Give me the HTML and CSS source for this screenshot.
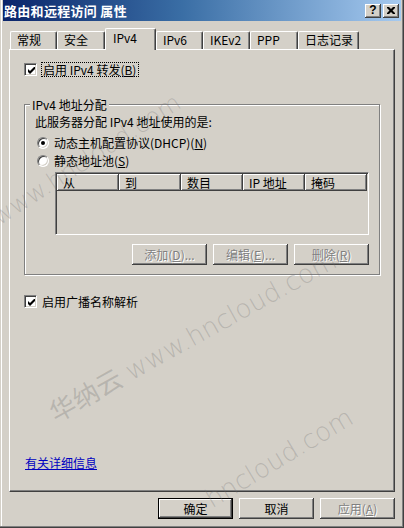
FILE: index.html
```html
<!DOCTYPE html>
<html lang="zh-CN">
<head>
<meta charset="utf-8">
<title>路由和远程访问 属性</title>
<link rel="stylesheet" href="styles.css">
</head>
<body>
<div class="window">
  <div class="titlebar">
    <span class="title">路由和远程访问 属性</span>
    <div class="caption-btns">
      <span class="cap-btn help">?</span>
      <span class="cap-btn close"><svg width="8" height="7" viewBox="0 0 8 7"><path d="M0 0h2l2 2 2-2h2v1l-2.5 2.5L8 6v1H6L4 5 2 7H0V6l2.5-2.5L0 1z" fill="#000"/></svg></span>
    </div>
  </div>

  <div class="tabs">
    <div class="tab t1">常规</div>
    <div class="tab t2">安全</div>
    <div class="tab selected">IPv4</div>
    <div class="tab t4">IPv6</div>
    <div class="tab t5">IKEv2</div>
    <div class="tab t6">PPP</div>
    <div class="tab t7">日志记录</div>
  </div>

  <div class="panel">
    <div class="check-row">
      <span class="checkbox"><svg width="7" height="7" viewBox="0 0 7 7"><path d="M0 2L2 4L7 -1V2L2 7L0 5Z" fill="#000"/></svg></span>
      <span class="label focus">启用 IPv4 转发(<u>B</u>)</span>
    </div>

    <div class="group">
      <div class="group-title">IPv4 地址分配</div>
      <div class="group-text">此服务器分配 IPv4 地址使用的是:</div>
      <div class="radio-row">
        <span class="radio on"></span>
        <span class="radio-label">动态主机配置协议(DHCP)(<u>N</u>)</span>
      </div>
      <div class="radio-row second">
        <span class="radio"></span>
        <span class="radio-label">静态地址池(<u>S</u>)</span>
      </div>
      <div class="listview">
        <div class="lv-header">
          <span class="col">从</span>
          <span class="col">到</span>
          <span class="col">数目</span>
          <span class="col">IP 地址</span>
          <span class="col">掩码</span>
        </div>
      </div>
      <div class="group-buttons">
        <button class="btn disabled">添加(<u>D</u>)...</button>
        <button class="btn disabled">编辑(<u>E</u>)...</button>
        <button class="btn disabled">删除(<u>R</u>)</button>
      </div>
    </div>

    <div class="check-row second">
      <span class="checkbox"><svg width="7" height="7" viewBox="0 0 7 7"><path d="M0 2L2 4L7 -1V2L2 7L0 5Z" fill="#000"/></svg></span>
      <span class="label plain">启用广播名称解析</span>
    </div>

    <a class="more-link" href="#">有关详细信息</a>
  </div>

  <div class="dialog-buttons">
    <button class="btn default">确定</button>
    <button class="btn">取消</button>
    <button class="btn disabled">应用(<u>A</u>)</button>
  </div>

  <div class="watermarks" aria-hidden="true">
    <span class="wm wm1">www.hncloud.com</span>
    <span class="wm wm2">华纳云 www.hncloud.com</span>
    <span class="wm wm3">hncloud.com</span>
  </div>
</div>
</body>
</html>
```

FILE: styles.css
```css
html, body {
  margin: 0;
  padding: 0;
}

body {
  font-family: "Noto Sans CJK SC", "Liberation Sans", sans-serif;
  font-size: 12px;
  color: #000;
  background: #d4d0c8;
}

.window {
  position: relative;
  width: 404px;
  height: 528px;
  box-sizing: border-box;
  background: #d4d0c8;
  box-shadow: inset -1px -1px #404040, inset -2px -2px #808080, inset 1px 0 #d4d0c8, inset 2px 0 #fff;
  overflow: hidden;
  display: flex;
  flex-direction: column;
}

/* Title bar */
.titlebar {
  height: 21px;
  margin: 0 3px;
  padding: 0 2px 0 1px;
  display: flex;
  align-items: center;
  justify-content: space-between;
  background: linear-gradient(to right, #0a246a 0%, #3a6ea5 45%, #a6caf0 100%);
}

.title {
  color: #fff;
  font-weight: bold;
  font-size: 13px;
  letter-spacing: 0.3px;
  line-height: 21px;
}

.caption-btns {
  display: flex;
  gap: 2px;
}

.cap-btn {
  width: 16px;
  height: 14px;
  box-sizing: border-box;
  background: #d4d0c8;
  box-shadow: inset -1px -1px #404040, inset 1px 1px #fff, inset -2px -2px #808080;
  display: flex;
  align-items: center;
  justify-content: center;
}

.cap-btn.help {
  font-family: "Liberation Sans", sans-serif;
  font-weight: bold;
  font-size: 12px;
  line-height: 14px;
  padding-bottom: 1px;
}

/* Tabs */
.tabs {
  display: flex;
  align-items: flex-end;
  height: 21px;
  margin: 7px 0 0 10px;
}

.tab {
  box-sizing: border-box;
  height: 18px;
  line-height: 16px;
  padding-left: 6px;
  background: #d4d0c8;
  border-top: 1px solid #fff;
  border-left: 1px solid #fff;
  border-right: 1px solid #404040;
  box-shadow: inset -1px 0 #808080;
  border-radius: 2px 2px 0 0;
  white-space: nowrap;
}

.t1 { width: 47px; }
.t2 { width: 48px; }
.t4 { width: 47px; }
.t5 { width: 47px; }
.t6 { width: 48px; }
.t7 { width: 61px; }

.tab.selected {
  position: relative;
  z-index: 2;
  width: 51px;
  height: 22px;
  margin-bottom: -1px;
  line-height: 18px;
  padding-left: 7px;
  padding-bottom: 3px;
}

/* Panel */
.panel {
  position: relative;
  z-index: 1;
  box-sizing: border-box;
  width: 386px;
  height: 443px;
  margin-left: 9px;
  padding: 12px 0 0 14px;
  border: 1px solid;
  border-color: #fff #404040 #404040 #fff;
  box-shadow: inset -1px -1px #808080;
  display: flex;
  flex-direction: column;
  align-items: flex-start;
}

.check-row {
  display: flex;
  align-items: center;
  height: 15px;
}

.check-row.second {
  margin-top: 19px;
}

.checkbox {
  width: 13px;
  height: 13px;
  box-sizing: border-box;
  background: #fff;
  border: 1px solid;
  border-color: #808080 #fff #fff #808080;
  box-shadow: inset 1px 1px #404040, inset -1px -1px #d4d0c8;
  display: flex;
  align-items: center;
  justify-content: center;
}

.checkbox svg {
  display: block;
  margin: 1px 0 0 1px;
}

.label {
  line-height: 13px;
  white-space: nowrap;
}

.label.focus {
  margin-left: 4px;
  padding: 0 2px 0 1px;
  border: 1px dotted #000;
}

.label.plain {
  margin-left: 5px;
}

/* Group box */
.group {
  box-sizing: border-box;
  width: 356px;
  height: 171px;
  margin-top: 27px;
  padding-left: 10px;
  border: 1px solid #808080;
  box-shadow: inset 1px 1px #fff, 1px 1px #fff;
}

.group-title {
  width: fit-content;
  margin: -7px 0 0 -5px;
  padding: 0 2px;
  line-height: 14px;
  background: #d4d0c8;
}

.group-text {
  margin-top: 3px;
  line-height: 14px;
}

.radio-row {
  display: flex;
  align-items: center;
  height: 14px;
  margin-top: 7px;
  padding-left: 2px;
}

.radio-row.second {
  margin-top: 4px;
}

.radio {
  position: relative;
  width: 12px;
  height: 12px;
  box-sizing: border-box;
  border-radius: 50%;
  background: #fff;
  border: 1px solid;
  border-color: #808080 #fff #fff #808080;
  box-shadow: inset 1px 1px #404040, inset -1px -1px #d4d0c8;
}

.radio.on::after {
  content: "";
  position: absolute;
  left: 3px;
  top: 3px;
  width: 4px;
  height: 4px;
  border-radius: 50%;
  background: #000;
}

.radio-label {
  margin-left: 5px;
  line-height: 14px;
  white-space: nowrap;
}

/* List view */
.listview {
  box-sizing: border-box;
  width: 314px;
  height: 63px;
  margin: 4px 0 0 20px;
  padding: 1px;
  border: 1px solid;
  border-color: #808080 #fff #fff #808080;
  box-shadow: inset 1px 1px #404040, inset -1px -1px #d4d0c8;
  background: #d4d0c8;
}

.lv-header {
  display: flex;
  height: 17px;
}

.col {
  box-sizing: border-box;
  width: 62px;
  height: 17px;
  padding-left: 6px;
  line-height: 17px;
  background: #d4d0c8;
  box-shadow: inset -1px -1px #404040, inset 1px 1px #fff, inset -2px -2px #808080;
  white-space: nowrap;
}

.group-buttons {
  display: flex;
  justify-content: flex-end;
  gap: 6px;
  width: 314px;
  margin: 9px 0 0 20px;
}

/* Buttons */
.btn {
  box-sizing: border-box;
  width: 75px;
  height: 21px;
  padding: 0;
  margin: 0;
  border: none;
  font: inherit;
  line-height: 19px;
  color: #000;
  background: #d4d0c8;
  box-shadow: inset -1px -1px #404040, inset 1px 1px #fff, inset -2px -2px #808080;
  text-align: center;
  white-space: nowrap;
}

.btn.disabled {
  color: #808080;
  text-shadow: 1px 1px 0 #fff;
}

.btn.default {
  border: 1px solid #000;
  box-shadow: inset -1px -1px #404040, inset 1px 1px #fff, inset -2px -2px #808080;
  line-height: 17px;
}

.more-link {
  margin: 147px 0 0 1px;
  line-height: 14px;
  color: #0000c0;
  text-decoration: underline;
}

.dialog-buttons {
  display: flex;
  justify-content: flex-end;
  gap: 6px;
  margin-top: 6px;
  padding-right: 9px;
}

/* Watermark overlay */
.watermarks {
  position: absolute;
  inset: 0;
  z-index: 5;
  pointer-events: none;
  overflow: hidden;
}

.wm {
  position: absolute;
  white-space: nowrap;
  font-family: "DejaVu Sans", sans-serif;
  font-weight: 200;
  font-size: 26px;
  line-height: 26px;
  color: rgba(110, 110, 110, 0.28);
  transform-origin: 0 100%;
}

.wm1 {
  left: 2px;
  top: 204px;
  font-size: 24px;
  transform: rotate(-33deg);
}

.wm2 {
  left: 58px;
  top: 400px;
  transform: rotate(-29deg);
}

.wm3 {
  left: 214px;
  top: 486px;
  transform: rotate(-31deg);
}
```
